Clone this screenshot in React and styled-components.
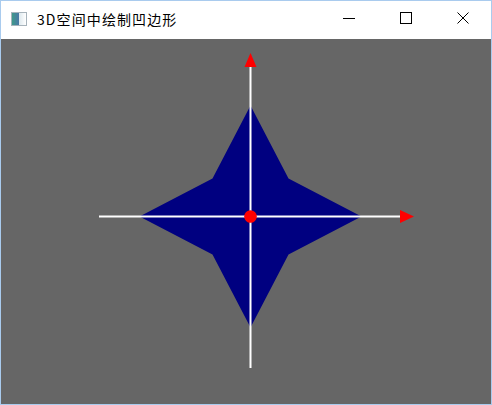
import styled, { createGlobalStyle } from "styled-components";

const GlobalStyle = createGlobalStyle`
  html, body {
    margin: 0;
    padding: 0;
    background: #ffffff;
  }
`;

const Frame = styled.div`
  width: 492px;
  height: 405px;
  box-sizing: border-box;
  border: 1px solid #a9cbee;
  display: flex;
  flex-direction: column;
  overflow: hidden;
`;

const TitleBar = styled.div`
  height: 38px;
  flex: none;
  display: flex;
  align-items: center;
  background: #ffffff;
  padding-left: 10px;
`;

const AppIcon = styled.div`
  width: 16px;
  height: 14px;
  box-sizing: border-box;
  border: 1px solid #a7b3bb;
  background: linear-gradient(90deg, #3f9a8a 0%, #4a78a6 50%, #dfe9ee 52%, #ffffff 100%);
  margin-right: 10px;
  margin-top: -2px;
`;

const Title = styled.span`
  font-family: "Noto Sans CJK SC", sans-serif;
  font-size: 14px;
  letter-spacing: 1.1px;
  color: #000000;
  flex: 1;
  margin-top: -2px;
`;

const Controls = styled.div`
  display: flex;
  height: 100%;
`;

const CtrlButton = styled.div`
  width: 57px;
  height: 100%;
  display: flex;
  align-items: center;
  justify-content: center;
  margin-top: -2px;
`;

const Canvas = styled.div`
  flex: 1;
  background: #666666;
  display: flex;
`;

// drawing coordinates are in page pixels, shifted by the canvas origin (1, 39)
const cx = 250.5;
const cy = 216.5;
const outer = 111;
const inner = 38;

const starPoints = [
  [cx, cy - outer],
  [cx + inner, cy - inner],
  [cx + outer, cy],
  [cx + inner, cy + inner],
  [cx, cy + outer],
  [cx - inner, cy + inner],
  [cx - outer, cy],
  [cx - inner, cy - inner],
]
  .map(([x, y]) => `${x},${y}`)
  .join(" ");

function Scene() {
  return (
    <svg width="490" height="365" viewBox="1 39 490 365">
      <polygon points={starPoints} fill="#000080" />
      <line x1="99" y1={cy} x2="402" y2={cy} stroke="#ffffff" strokeWidth="2" />
      <line x1={cx} y1="66" x2={cx} y2="368" stroke="#ffffff" strokeWidth="2" />
      <polygon points="244.5,67 256.5,67 250.5,53" fill="#ff0000" />
      <polygon points="400,210 400,223 414,216.5" fill="#ff0000" />
      <circle cx={cx} cy={cy} r="6.3" fill="#ff0000" />
    </svg>
  );
}

function App() {
  return (
    <>
      <GlobalStyle />
      <Frame>
        <TitleBar>
          <AppIcon />
          <Title>3D空间中绘制凹边形</Title>
          <Controls>
            <CtrlButton>
              <svg width="12" height="12" viewBox="0 0 12 12">
                <line x1="0" y1="6.5" x2="12" y2="6.5" stroke="#000" strokeWidth="1" />
              </svg>
            </CtrlButton>
            <CtrlButton>
              <svg width="12" height="12" viewBox="0 0 12 12">
                <rect x="0.5" y="0.5" width="11" height="11" fill="none" stroke="#000" strokeWidth="1" />
              </svg>
            </CtrlButton>
            <CtrlButton>
              <svg width="12" height="12" viewBox="0 0 12 12">
                <path d="M0.5 0.5 L11.5 11.5 M11.5 0.5 L0.5 11.5" stroke="#000" strokeWidth="1" />
              </svg>
            </CtrlButton>
          </Controls>
        </TitleBar>
        <Canvas>
          <Scene />
        </Canvas>
      </Frame>
    </>
  );
}

export default App;
